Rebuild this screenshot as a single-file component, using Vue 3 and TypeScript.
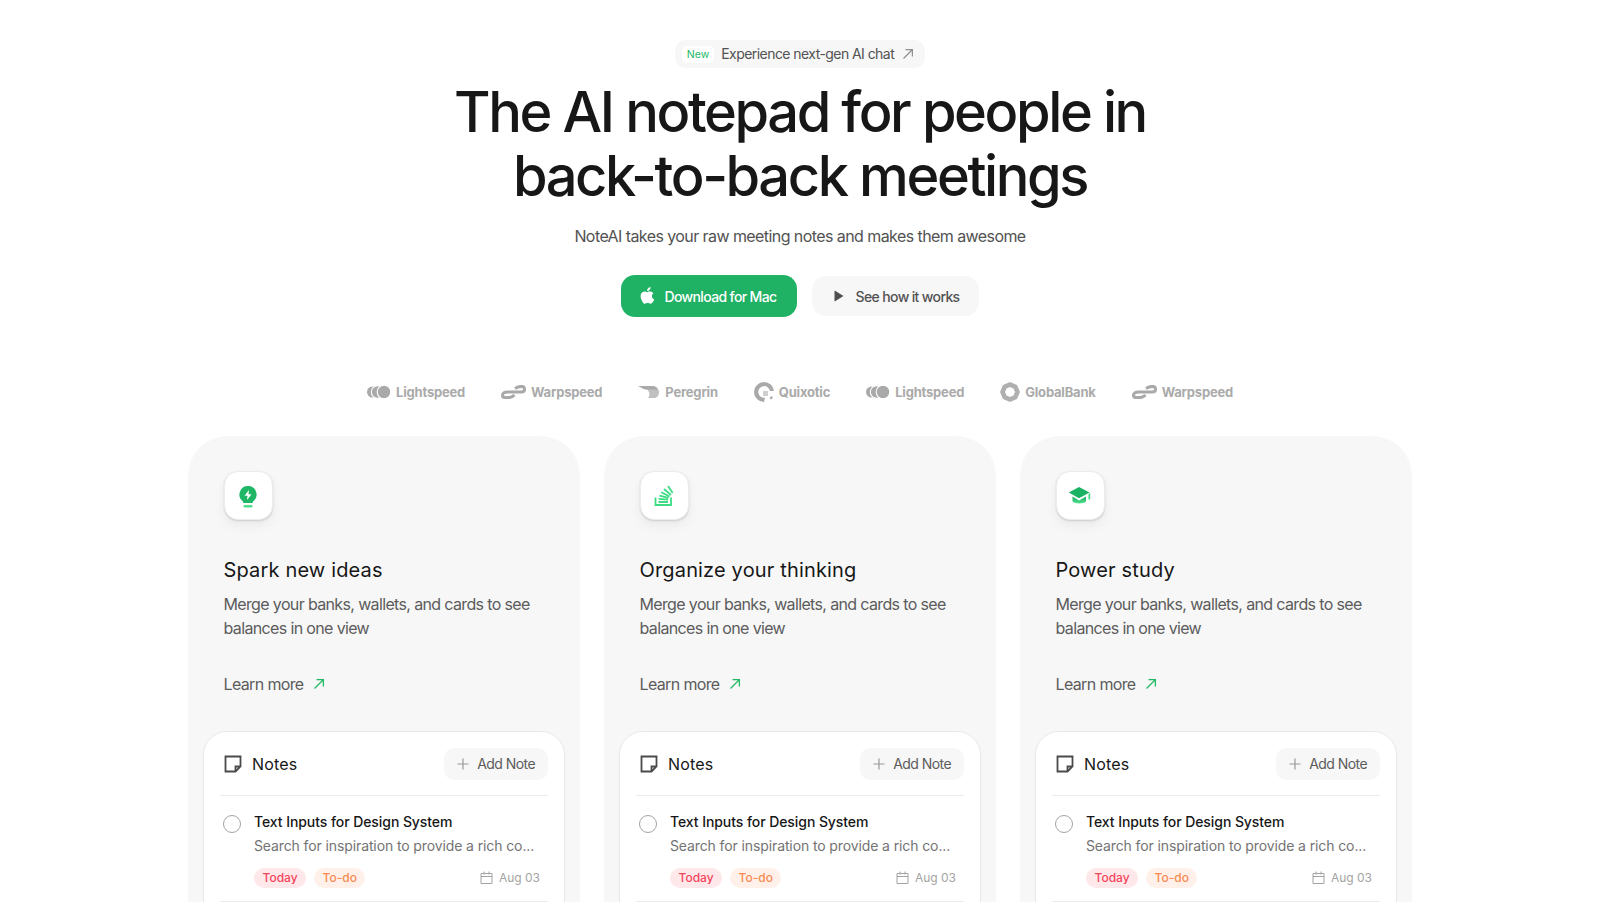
<template>
  <div class="page">
    <section class="hero">
      <a class="pill">
        <span class="pill__tag">New</span>
        <span class="pill__text">Experience next-gen AI chat</span>
        <svg class="pill__arrow" width="14" height="14" viewBox="0 0 14 14" fill="none" stroke="#8f8f8f" stroke-width="1.2">
          <path d="M2.500 11.500 11 3M4.500 2.600h6.900v6.900" />
        </svg>
      </a>
      <h1 class="hero__title">The AI notepad for people in<br />back-to-back meetings</h1>
      <p class="hero__sub">NoteAI takes your raw meeting notes and makes them awesome</p>
      <div class="hero__actions">
        <button class="btn btn--green">
          <svg width="16" height="18" viewBox="0 0 16 18" fill="#fff">
            <path d="M11.600 0c.1 1-.3 2-.9 2.700-.6.8-1.600 1.300-2.500 1.300-.1-1 .3-2 .9-2.700C9.700.6 10.800.1 11.600 0zM14.700 6.100c-.1.100-1.800 1-1.800 3.100 0 2.400 2.200 3.300 2.300 3.300 0 .1-.4 1.200-1.200 2.300-.7 1-1.500 2-2.600 2-1.100 0-1.400-.7-2.700-.7-1.300 0-1.700.7-2.700.7-1.100 0-1.800-.9-2.600-2.100C2.400 13 1.600 11 1.600 9.100c0-3 2-4.600 3.900-4.600 1 0 1.900.7 2.600.7.600 0 1.600-.7 2.800-.7.500 0 2.200 0 3.300 1.600z" />
          </svg>
          Download for Mac
        </button>
        <button class="btn btn--gray">
          <svg width="12" height="12" viewBox="0 0 12 12" fill="#4f4f4f"><path d="M1.500 1.200v9.600a.4.400 0 0 0 .6.340l8-4.800a.4.400 0 0 0 0-.68l-8-4.800a.4.400 0 0 0-.6.340z" /></svg>
          See how it works
        </button>
      </div>
    </section>

    <section class="logos">
      <div v-for="(logo, i) in logos" :key="i" class="logo">
        <svg v-if="logo.kind === 'lightspeed'" width="24" height="14" viewBox="0 0 24 14" fill="#a9a9a9" stroke="#fff" stroke-width="1.100">
          <circle cx="5.500" cy="7" r="5.500" stroke="none" />
          <circle cx="10.500" cy="7" r="6.200" />
          <circle cx="17" cy="7" r="6.800" />
        </svg>
        <svg v-else-if="logo.kind === 'warpspeed'" width="25" height="14" viewBox="0 0 25 14" fill="none" stroke="#a9a9a9" stroke-width="3">
          <path d="M14 3.400c2.500-1.600 4.500-2 6.500-2 1.700 0 3 1.200 3 2.800S22.200 7 20.500 7H6.500c-2.900 0-5 1-5 3.300 0 1.500 1 2.300 2.500 2.300h3.500c2.500 0 4.500-1 6-2.600" />
        </svg>
        <svg v-else-if="logo.kind === 'peregrin'" width="22" height="14" viewBox="0 0 22 14" fill="#a9a9a9">
          <path d="M0 1h14c4 0 7 2.500 7 6.500 0 3-2 5.500-5 5.500H10c1.500-1.500 2-4.500.5-7C9 3.500 5 2.500 0 1z" opacity=".75" />
          <path d="M0 1h14c3 0 5 1.500 5.500 3.500H7C4.500 3.500 2 2 0 1z" />
        </svg>
        <svg v-else-if="logo.kind === 'quixotic'" width="20" height="20" viewBox="0 0 20 20">
          <path d="M10 0a10 10 0 1 0 0 20l1-4.200a5.900 5.900 0 1 1 5-6.800h4A10 10 0 0 0 10 0z" fill="#a9a9a9" />
          <rect x="9" y="9" width="5" height="5" fill="#cfcfcf" />
          <path d="M15.500 16l2-2 1.500 1.500-2 2z" fill="#a9a9a9" />
        </svg>
        <svg v-else width="20" height="20" viewBox="0 0 20 20" fill="#b0b0b0">
          <path fill-rule="evenodd" d="M10 0l7 3 3 7-3 7-7 3-7-3-3-7 3-7zM10 5l-3.500 1.500L5 10l1.500 3.500L10 15l3.500-1.500L15 10l-1.500-3.500z" />
        </svg>
        <span class="logo__name">{{ logo.name }}</span>
      </div>
    </section>

    <section class="cards">
      <article v-for="card in cards" :key="card.title" class="card">
        <div class="card__top">
          <div class="card__icon">
            <svg v-if="card.icon === 'bulb'" class="glyph-bulb" width="20" height="24" viewBox="0 0 20 24">
              <path d="M10 1a8.500 8.500 0 0 0-5 15.400V17a1 1 0 0 0 1 1h8a1 1 0 0 0 1-1v-.6A8.500 8.500 0 0 0 10 1z" fill="#1fb765" />
              <path d="M11 5 6.500 10.800H9.500L9 15l4.500-5.800h-3z" fill="#fff" />
              <rect x="5.500" y="20" width="9" height="2.500" rx="1.200" fill="#4fe08e" />
            </svg>
            <svg v-else-if="card.icon === 'stack'" class="glyph-stack" width="22" height="24" viewBox="0 0 22 24" fill="none" stroke="#3ddc84" stroke-width="1.800">
              <path d="M2.500 14.500V22h15.500v-7.500" />
              <path d="M5.500 19h9.500M5.700 15.800l9.300 .9M6.500 12.600l9 2.300M8.300 9.200l8.200 4.300M11 6l7 6M15 3l4.700 7" />
            </svg>
            <svg v-else class="glyph-cap" width="24" height="20" viewBox="0 0 24 20">
              <defs>
                <linearGradient id="cap" x1="0" y1="0" x2="0" y2="1">
                  <stop offset="0" stop-color="#17a95c" />
                  <stop offset="1" stop-color="#52e294" />
                </linearGradient>
              </defs>
              <path d="M11 1 .8 6.600 11 12.300 21.500 6.600z" fill="#1cb264" />
              <path d="M4.500 10.500v5c2 2.500 11 2.800 13.500 0v-5L11 14.500z" fill="url(#cap)" />
              <path d="M20.500 8v5.500h1.700V7z" fill="#3ddc84" />
            </svg>
          </div>
          <h2 class="card__title">{{ card.title }}</h2>
          <p class="card__text">Merge your banks, wallets, and cards to see balances in one view</p>
          <a class="card__link">
            Learn more
            <svg width="14" height="14" viewBox="0 0 14 14" fill="none" stroke="#22b866" stroke-width="1.300">
              <path d="M2.500 11.500 11 3M4.500 2.600h6.900v6.900" />
            </svg>
          </a>
        </div>
        <div class="notes">
          <header class="notes__head">
            <div class="notes__label">
              <svg width="18" height="18" viewBox="0 0 18 18" fill="none" stroke="#4a4a4a" stroke-width="1.800">
                <path d="M1.500 1.500h15v10l-5 5h-10zM16.500 11.500h-5v5" />
              </svg>
              Notes
            </div>
            <button class="notes__add">
              <svg width="12" height="12" viewBox="0 0 12 12" stroke="#9a9a9a" stroke-width="1.200"><path d="M6 .5v11M.5 6h11" /></svg>
              Add Note
            </button>
          </header>
          <div v-for="n in 2" :key="n" class="note">
            <span class="note__check"></span>
            <div class="note__body">
              <div class="note__title">Text Inputs for Design System</div>
              <div class="note__desc">Search for inspiration to provide a rich co...</div>
              <div class="note__meta">
                <span class="tag tag--red">Today</span>
                <span class="tag tag--orange">To-do</span>
                <span class="note__date">
                  <svg width="13" height="13" viewBox="0 0 13 13" fill="none" stroke="#a3a3a3" stroke-width="1">
                    <path d="M1 2.500h11v10H1zM1 5.500h11M4 .5v3M9 .5v3" />
                  </svg>
                  Aug 03
                </span>
              </div>
            </div>
          </div>
        </div>
      </article>
    </section>
  </div>
</template>

<script setup lang="ts">
const logos = [
  { kind: 'lightspeed', name: 'Lightspeed' },
  { kind: 'warpspeed', name: 'Warpspeed' },
  { kind: 'peregrin', name: 'Peregrin' },
  { kind: 'quixotic', name: 'Quixotic' },
  { kind: 'lightspeed', name: 'Lightspeed' },
  { kind: 'globalbank', name: 'GlobalBank' },
  { kind: 'warpspeed', name: 'Warpspeed' }
]

const cards = [
  { title: 'Spark new ideas', icon: 'bulb' },
  { title: 'Organize your thinking', icon: 'stack' },
  { title: 'Power study', icon: 'cap' }
]
</script>

<style>
html, body { overflow: hidden; }
</style>

<style scoped>
.page {
  height: 902px;
  overflow: hidden;
  background: #fff;
  font-family: Inter, "Liberation Sans", sans-serif;
  color: #171717;
}

.hero {
  display: flex;
  flex-direction: column;
  align-items: center;
  padding-top: 40px;
}

.pill {
  display: flex;
  align-items: center;
  gap: 7px;
  height: 28px;
  padding: 0 10px 0 7px;
  box-sizing: border-box;
  border-radius: 10px;
  background: #f7f7f7;
  font-size: 14px;
  letter-spacing: -0.04em;
  color: #525252;
}
.pill__text { padding-bottom: 1px; }
.pill__tag {
  padding: 2px 5px;
  background: #fff;
  border-radius: 5px;
  font-size: 10.500px;
  line-height: 13px;
  letter-spacing: 0;
  color: #22b866;
}
.pill__arrow { margin-left: 0; }

.hero__title {
  margin: 12px 0 0;
  font-size: 56px;
  line-height: 64px;
  font-weight: 500;
  letter-spacing: -0.043em;
  text-align: center;
  color: #171717;
}

.hero__sub {
  margin: 16px 0 0;
  font-size: 16px;
  line-height: 24px;
  letter-spacing: -0.036em;
  color: #525252;
}

.hero__actions {
  display: flex;
  align-items: center;
  gap: 15px;
  margin-top: 27px;
}

.btn {
  display: flex;
  align-items: center;
  border: 0;
  padding-bottom: 1px;
  box-sizing: border-box;
  font-family: inherit;
  font-size: 14px;
  letter-spacing: -0.045em;
  border-radius: 14px;
}
.btn--green {
  height: 42px;
  gap: 9px;
  padding-left: 18px;
  padding-right: 20px;
  background: #1fb164;
  color: #fff;
  font-weight: 500;
}
.btn--gray {
  height: 40px;
  gap: 11px;
  padding-left: 21px;
  padding-right: 19px;
  background: #f7f7f7;
  color: #525252;
  font-weight: 500;
}

.logos {
  display: flex;
  justify-content: center;
  align-items: center;
  gap: 36px;
  margin-top: 61px;
  height: 28px;
}
.logo {
  display: flex;
  align-items: center;
  gap: 5px;
}
.logo__name {
  font-size: 13px;
  font-weight: 700;
  letter-spacing: -0.015em;
  color: #aaaaaa;
}

.cards {
  display: grid;
  grid-template-columns: repeat(3, 392px);
  justify-content: center;
  gap: 24px;
  margin-top: 30px;
}

.card {
  background: #f7f7f7;
  border-radius: 40px;
  padding: 16px 15px 0;
}

.card__top {
  padding: 19px 20.500px 0;
}

.card__icon {
  display: flex;
  align-items: center;
  justify-content: center;
  width: 49px;
  height: 49px;
  background: #fff;
  border-radius: 14px;
  border: 1px solid #ececec;
  box-sizing: border-box;
  box-shadow: 0 1px 2px rgba(0, 0, 0, 0.14), 0 6px 12px rgba(0, 0, 0, 0.05);
}
.glyph-bulb { margin-top: 2px; }
.glyph-cap { margin-top: 1px; }
.glyph-stack { margin-top: -1px; }

.card__title {
  margin: 36px 0 0;
  font-size: 20px;
  line-height: 28px;
  font-weight: 400;
  letter-spacing: 0.008em;
  color: #171717;
}

.card__text {
  margin: 8px 0 0;
  font-size: 16px;
  line-height: 24px;
  letter-spacing: -0.04em;
  color: #5c5c5c;
}

.card__link {
  display: flex;
  align-items: center;
  gap: 8px;
  margin-top: 32px;
  font-size: 16px;
  line-height: 24px;
  letter-spacing: -0.04em;
  color: #5c5c5c;
}

.notes {
  margin-top: 35px;
  background: #fff;
  border: 1px solid #e8e8e8;
  border-radius: 24px;
  padding: 16px 16px 0;
}

.notes__head {
  display: flex;
  justify-content: space-between;
  align-items: center;
  padding-bottom: 15px;
  border-bottom: 1px solid #ebebeb;
}
.notes__label {
  display: flex;
  align-items: center;
  gap: 10px;
  padding-left: 4px;
  font-size: 16px;
  font-weight: 400;
  letter-spacing: 0.01em;
  color: #171717;
}
.notes__add {
  display: flex;
  align-items: center;
  gap: 8px;
  height: 32px;
  padding: 0 13px 1px;
  border: 0;
  border-radius: 10px;
  background: #f7f7f7;
  font-family: inherit;
  font-size: 14px;
  letter-spacing: -0.04em;
  color: #5c5c5c;
}

.note {
  display: flex;
  gap: 13px;
  padding: 16px 8px 13px 3px;
  border-bottom: 1px solid #ebebeb;
}
.note__check {
  flex: none;
  box-sizing: border-box;
  width: 18px;
  height: 18px;
  margin-top: 3px;
  border: 1.800px solid #a3a3a3;
  border-radius: 50%;
}
.note__body { flex: 1; min-width: 0; }
.note__title {
  font-size: 14px;
  line-height: 20px;
  font-weight: 500;
  letter-spacing: -0.005em;
  color: #171717;
}
.note__desc {
  margin-top: 4px;
  font-size: 14px;
  line-height: 20px;
  letter-spacing: -0.008em;
  color: #737373;
}
.note__meta {
  display: flex;
  align-items: center;
  gap: 8px;
  margin-top: 12px;
}
.tag {
  height: 20px;
  padding: 0 8.500px;
  border-radius: 10px;
  font-size: 12px;
  line-height: 20px;
  font-weight: 500;
}
.tag--red { background: #ffe8ea; color: #f5455c; }
.tag--orange { background: #fff0ea; color: #fb8a50; }
.note__date {
  display: flex;
  align-items: center;
  gap: 6px;
  margin-left: auto;
  padding-bottom: 1px;
  font-size: 12px;
  color: #a3a3a3;
}
</style>
